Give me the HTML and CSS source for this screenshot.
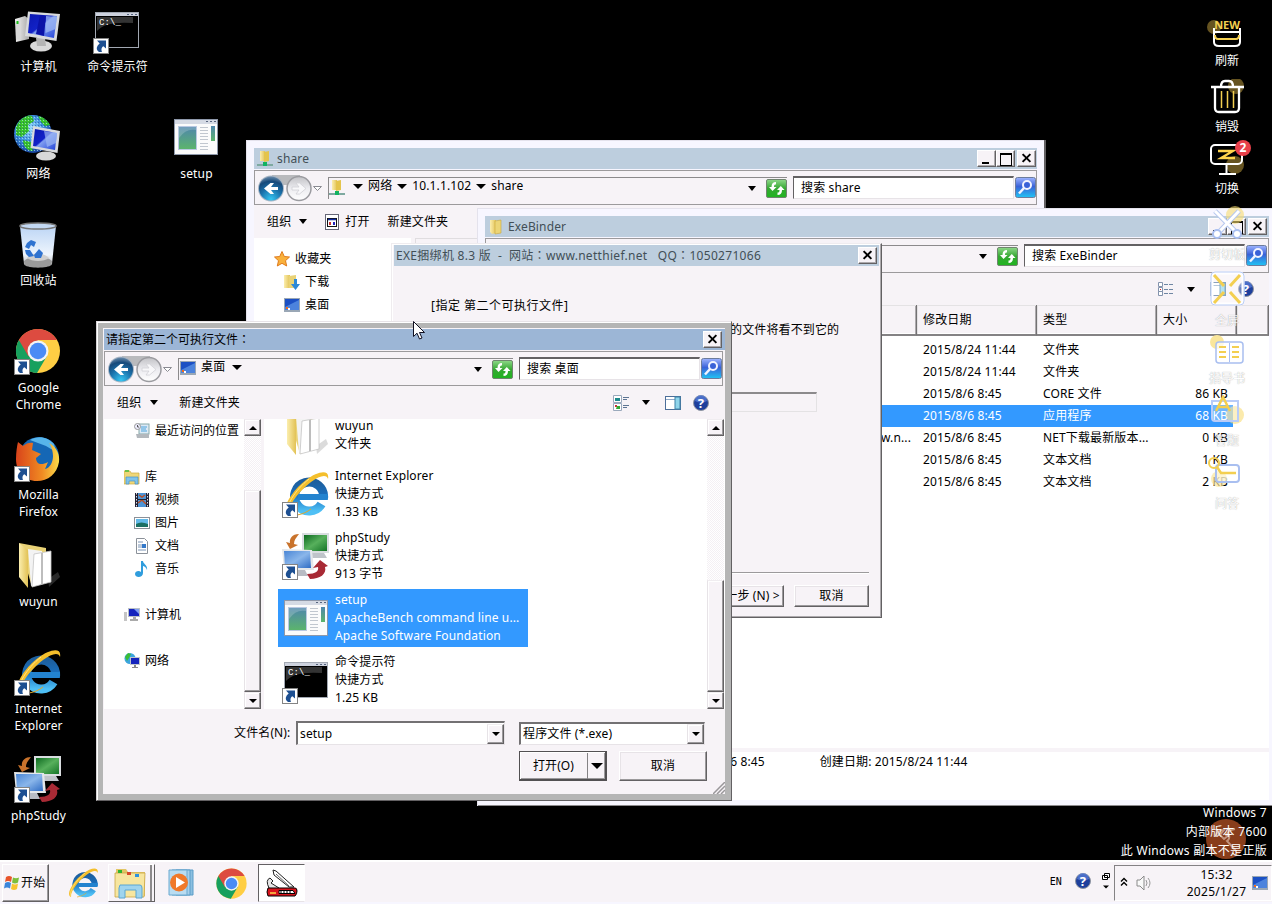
FILE: index.html
```html
<!DOCTYPE html>
<html lang="zh-CN">
<head>
<meta charset="utf-8">
<title>Windows 7</title>
<link rel="stylesheet" href="styles.css">
</head>
<body>
<svg class="sprites" width="0" height="0">
<defs>
<linearGradient id="gScreen" x1="0" y1="0" x2="1" y2="1"><stop offset="0" stop-color="#0b18b0"/><stop offset=".45" stop-color="#1222c8"/><stop offset=".5" stop-color="#7f9df0"/><stop offset="1" stop-color="#1f3fd8"/></linearGradient>
<linearGradient id="gCase" x1="0" y1="0" x2="1" y2="0"><stop offset="0" stop-color="#f4f4f4"/><stop offset="1" stop-color="#a9a9a9"/></linearGradient>
<radialGradient id="gGlobe" cx=".4" cy=".35" r=".7"><stop offset="0" stop-color="#9fe0ff"/><stop offset=".5" stop-color="#3c8fdd"/><stop offset="1" stop-color="#123a94"/></radialGradient>
<linearGradient id="gBin" x1="0" y1="0" x2="0" y2="1"><stop offset="0" stop-color="#bcd5f5"/><stop offset=".7" stop-color="#eef5fd"/><stop offset="1" stop-color="#b9b9b9"/></linearGradient>
<linearGradient id="gFolder" x1="0" y1="0" x2="1" y2="0"><stop offset="0" stop-color="#fbeeae"/><stop offset="1" stop-color="#e2c256"/></linearGradient>
<linearGradient id="gIe" x1="0" y1="0" x2="0" y2="1"><stop offset="0" stop-color="#1d5f9e"/><stop offset=".45" stop-color="#1a6fbd"/><stop offset="1" stop-color="#4fc0f5"/></linearGradient>
<linearGradient id="gApp" x1="0" y1="0" x2="0" y2="1"><stop offset="0" stop-color="#4f86ad"/><stop offset="1" stop-color="#5cb56b"/></linearGradient>
<linearGradient id="gGreen" x1="0" y1="0" x2="1" y2="1"><stop offset="0" stop-color="#0d6a20"/><stop offset=".5" stop-color="#57b05c"/><stop offset="1" stop-color="#147527"/></linearGradient>
<linearGradient id="gBlue" x1="0" y1="0" x2="1" y2="1"><stop offset="0" stop-color="#4a86d6"/><stop offset=".5" stop-color="#8ab6ea"/><stop offset="1" stop-color="#2f6cc4"/></linearGradient>
<radialGradient id="gOrb" cx=".5" cy=".95" r="1"><stop offset="0" stop-color="#35c6f2"/><stop offset=".45" stop-color="#1a72ac"/><stop offset=".75" stop-color="#174a7a"/><stop offset="1" stop-color="#7f9cb8"/></radialGradient>
<linearGradient id="gSearch" x1="0" y1="0" x2="0" y2="1"><stop offset="0" stop-color="#9fb4ff"/><stop offset=".45" stop-color="#3a62d8"/><stop offset="1" stop-color="#20c4f4"/></linearGradient>
<linearGradient id="gRefresh" x1="0" y1="0" x2="0" y2="1"><stop offset="0" stop-color="#8fd88a"/><stop offset=".5" stop-color="#35a832"/><stop offset="1" stop-color="#20b420"/></linearGradient>
<linearGradient id="gFox" x1="0" y1="0" x2="1" y2="0"><stop offset="0" stop-color="#d8431b"/><stop offset=".6" stop-color="#f08a22"/><stop offset="1" stop-color="#fbdc4a"/></linearGradient>
<linearGradient id="gSilver" x1="0" y1="0" x2="0" y2="1"><stop offset="0" stop-color="#c2c2c6"/><stop offset=".5" stop-color="#ececf0"/><stop offset="1" stop-color="#ffffff"/></linearGradient>
<pattern id="pGlobe" width="3" height="3" patternUnits="userSpaceOnUse"><rect width="1" height="1" fill="#19358c" opacity=".5"/><rect x="2" y="1" width="1" height="1" fill="#c8f4ff" opacity=".6"/></pattern>
</defs>

<symbol id="shortcut" viewBox="0 0 16 16"><rect x=".5" y=".5" width="15" height="15" fill="#fff" stroke="#848484"/><path d="M4 2.500h9v8l-2.600-2.300C8 9.600 8.300 12 9 14H6C2.500 11.500 3.500 8 6.700 5.400z" fill="#1d4f91"/></symbol>
<symbol id="computer" viewBox="0 0 48 48"><path d="M1 13l10-3 4 3v20L2 36z" fill="url(#gCase)"/><path d="M2 16l5-1v18l-5 1z" fill="#d8d8d8"/><rect x="2.500" y="15" width="2" height="3" fill="#19c019"/><ellipse cx="27" cy="40" rx="11" ry="5.500" fill="#d9d9d9"/><path d="M22 32h9l1 8h-9z" fill="#b4b4b4"/><path d="M14 5.500L46 8l-3.500 27L11 30z" fill="#d8dadd"/><path d="M16 8l27 2-3 22-26-5z" fill="url(#gScreen)"/><path d="M26 9l6 1-2 20-8-2z" fill="#0a12a8"/><path d="M32 10l11 1-1.500 12-10 4z" fill="#9db8f4" opacity=".75"/></symbol>
<symbol id="network" viewBox="0 0 48 48"><circle cx="19" cy="21" r="19" fill="url(#gGlobe)"/><path d="M2 14C6 5 14 1 18 3l2 5-6 4 1 6-7 6-6-2zM24 3c6 1 10 5 12 9l-5 1-4-4zM9 27l8 2 2 9c-6 0-10-5-10-11z" fill="#38c22b"/><circle cx="19" cy="21" r="19" fill="url(#pGlobe)"/><ellipse cx="32" cy="43" rx="10" ry="4.500" fill="#d8d8d8"/><path d="M19 13l27 5-2.500 22-27-5z" fill="#d8dadd"/><path d="M21 16l22 4-2 17-22-4z" fill="url(#gScreen)"/><path d="M30 18l13 2-1 10-9 4z" fill="#9db8f4" opacity=".7"/></symbol>
<symbol id="bin" viewBox="0 0 48 48"><path d="M6 6h36l-4 38c-4 4-24 4-28 0z" fill="url(#gBin)"/><path d="M10 41c6-6 22-6 28 0l-.5 4c-4 3.500-23 3.500-27 0z" fill="#9b9b9b"/><path d="M13 38c5-6 16-6 22 0-5 4-17 4-22 0z" fill="#cfcfcf"/><ellipse cx="24" cy="6" rx="18" ry="3" fill="#c3d8f2" stroke="#777" stroke-width="1.500"/><path d="M13 23l4-3 5 2-2 5-3-2-2 4-4-2zM11 30l5 0 4 6-5 1-3-3zM20 35l5-6 4 4-2 5h-6z" fill="#2f73d0"/></symbol>
<symbol id="chrome" viewBox="0 0 48 48"><circle cx="24" cy="24" r="22" fill="#ffce44"/><path d="M24 24L4.900 13A22 22 0 0 0 23 46l10-17z" fill="#17a05e"/><path d="M24 13h19A22 22 0 0 0 4.900 13l9.600 16.500z" fill="#dd4b40"/><circle cx="24" cy="24" r="10.500" fill="#f4f4f4"/><circle cx="24" cy="24" r="8.300" fill="#4b8bf5"/></symbol>
<symbol id="firefox" viewBox="0 0 48 48"><circle cx="25" cy="23" r="20" fill="#1567b5"/><path d="M16 6c8-5 18-3 24 4l2 8-10-6z" fill="#57b4ea"/><path d="M4 8l5 4c3-3 8-4 10-3l-1 7 9 4-5 4c0 6 5 8 12 4l-3 7c5-1 8-7 8-13 0-5-2-11-4-13 8 4 11 12 10 19-2 12-11 19-22 19C10 47 2 37 2 25 2 18 3 12 4 8z" fill="url(#gFox)"/></symbol>
<symbol id="folder" viewBox="0 0 48 48"><path d="M34 38l10-7 2 5-11 10z" fill="#888" opacity=".3"/><path d="M5 2l27 5v33l-14 6z" fill="#e9d276"/><path d="M14 8l14 2v32l-11 3z" fill="#f3f3f3"/><path d="M20 13l17-3v31l-19 5z" fill="#fff" stroke="#c4c4c4" stroke-width=".8"/><path d="M28 12v31" stroke="#bdbdbd" stroke-width="2"/><path d="M5 2l9 7v38L5 36z" fill="url(#gFolder)"/></symbol>
<symbol id="ie" viewBox="0 0 48 48"><path d="M41.500 28A14.500 14.500 0 1 0 39.500 34" fill="none" stroke="url(#gIe)" stroke-width="9"/><path d="M16 24h30q.3 3-.2 6H16z" fill="#2383cf"/><path d="M6 45C-3 42 10 20 24 10 36 1 48-1 46 9c-1-5-8-4-17 3C16 22 5 37 6 45z" fill="#f4bf2c"/><path d="M6 44C2 38 13 20 27 9" stroke="#ffe58a" fill="none"/><path d="M15 45c6-1 10-3 14-6" stroke="#dfa72a" fill="none"/></symbol>
<symbol id="php" viewBox="0 0 48 48"><path d="M20 1h27v20H20z" fill="#d9dde0"/><path d="M22 3h23v16H22z" fill="url(#gGreen)"/><path d="M30 21h12l3 5H28z" fill="#bfc4ca"/><path d="M0 17l30 1 2 20H2z" fill="#e4e7ea"/><path d="M2 19h26l1 17H3z" fill="url(#gBlue)"/><path d="M11 38h12l3 6H8z" fill="#b8bcc4"/><path d="M17 2c-7 0-10 5-9 9l-4-1 4 7 8-4-4-1c0-4 2-6 5-10z" fill="#c9732c"/><path d="M38 28l8 6-3 1c2 7-5 12-15 12l-3-5c9 0 12-3 11-7l-5 1z" fill="#a82a35"/></symbol>
<symbol id="app" viewBox="0 0 48 48"><rect x="2.500" y="6.500" width="43" height="35" fill="#fbfbfb" stroke="#8e98aa"/><rect x="3" y="7" width="42" height="4" fill="#d5dae4"/><path d="M34 8.500h2M38 8.500h2M42 8.500h2" stroke="#56647e"/><rect x="6.500" y="13.500" width="18" height="23" fill="url(#gApp)" stroke="#b9c9e2"/><path d="M7 25q7-10 17-8v-3H7z" fill="#fff" opacity=".2"/><path d="M28 14.500h8M28 17.500h8M28 20.500h8M28 23.500h8M28 26.500h8M28 30.500h8M28 33.500h8M28 36.500h8" stroke="#c1c7cf"/><rect x="39" y="13" width="4" height="15" fill="url(#gApp)"/></symbol>
<symbol id="cmd" viewBox="0 0 48 48"><rect x="2.500" y="6.500" width="43" height="35" fill="#000" stroke="#a2a8b2"/><rect x="3" y="7" width="42" height="3" fill="#cdd2de"/><path d="M34 8.500h2M38 8.500h2M42 8.500h2" stroke="#56647e"/><path d="M4 25Q12 15 40 17v-6H4z" fill="#555" opacity=".6"/><text x="6" y="19" class="cmd-text">C:\_</text></symbol>
<symbol id="desktop" viewBox="0 0 16 14"><rect width="16" height="14" fill="#9aa7b5"/><rect x="1" y="1" width="14" height="11" fill="#1c50c4"/><path d="M1 9L15 2v10H1z" fill="#4c83dd"/><rect x="2" y="9" width="2" height="2" fill="#f26b1b"/><rect x="4" y="10" width="2" height="2" fill="#fff"/></symbol>
<symbol id="folderS" viewBox="0 0 16 16"><path d="M2 1h6v13l-4 1-2-2z" fill="url(#gFolder)"/><path d="M7 2l6-1v13l-6 1z" fill="#ecd576" stroke="#c9a83c" stroke-width=".6"/></symbol>
<symbol id="folderNet" viewBox="0 0 16 16"><path d="M3 0h5v10H3z" fill="url(#gFolder)"/><path d="M7 1l5-1v10l-5 1z" fill="#e4c44c"/><path d="M0 14h16" stroke="#7ea9a0" stroke-width="2"/><path d="M6 11h4v4H6z" fill="#12b362"/></symbol>
<symbol id="folderDown" viewBox="0 0 16 16"><path d="M0 1h6v13H0z" fill="url(#gFolder)"/><path d="M5 2l7-1v13H5z" fill="#e9d276"/><path d="M10 5h3v5h3l-4.500 6L7 10h3z" fill="#2c89d8"/></symbol>
<symbol id="star" viewBox="0 0 16 16"><path d="M8 .5l2.300 5 5.200.5-4 3.700 1.200 5.300L8 12.300 3.300 15l1.200-5.300L.5 6l5.200-.5z" fill="#f9b13c" stroke="#df7a1c"/></symbol>
<symbol id="recent" viewBox="0 0 16 16"><rect x="5" y="1" width="10" height="10" fill="#dce9f5" stroke="#8aa"/><path d="M7 4h6M7 6h5M7 8h6" stroke="#4aa3dc"/><path d="M2 11h13v4H3z" fill="#b3b8bd"/><circle cx="3.500" cy="3.500" r="3" fill="#eef" stroke="#999"/><path d="M3.500 2v2h1.500" stroke="#555" fill="none"/></symbol>
<symbol id="library" viewBox="0 0 16 16"><path d="M0 2h6l1 2h8v11H0z" fill="#efd777" stroke="#cda93d" stroke-width=".7"/><rect x="1" y="1" width="4" height="2" fill="#6cc04a"/><path d="M2 8h12v7h-3v-3H5v3H2z" fill="#7fc3ea" stroke="#4b93c9" stroke-width=".7"/></symbol>
<symbol id="video" viewBox="0 0 16 16"><rect x="1" y="1" width="14" height="14" fill="#223"/><path d="M2.500 1v14M13.500 1v14" stroke="#dde" stroke-dasharray="1.500 1.500"/><rect x="4" y="1" width="8" height="14" fill="#4d94d6"/><path d="M5 3l3 2 3-2M4 11l4-3 4 4" stroke="#b84f27" stroke-width="1.500" fill="none"/><path d="M4 7.500h8" stroke="#223"/></symbol>
<symbol id="picture" viewBox="0 0 16 16"><rect x=".5" y="2.500" width="15" height="11" fill="#fff" stroke="#8b9199"/><rect x="2" y="4" width="12" height="8" fill="#62b9e8"/><path d="M2 9q5-3 12 0v3H2z" fill="#1b6f63"/></symbol>
<symbol id="document" viewBox="0 0 16 16"><path d="M2.500.5h8l3 3v12h-11z" fill="#fff" stroke="#8b9199"/><path d="M4 4h5M4 7h4M4 9h4M4 12h8" stroke="#7a93b4"/><rect x="8" y="6" width="4" height="4" fill="#3378c9"/></symbol>
<symbol id="music" viewBox="0 0 16 16"><path d="M7 0h2c0 3 5 4 4 9-1-3-3-4-4-4v7c0 5-8 5-8 1 0-3 4-4 6-2z" fill="#309ddd"/></symbol>
<symbol id="computerS" viewBox="0 0 16 16"><rect x="0" y="5" width="3" height="9" fill="#c5c5c5"/><rect x="4" y="1" width="12" height="9" fill="#b9bfc6"/><rect x="5" y="2" width="10" height="7" fill="#1524bd"/><path d="M10 2h5v5z" fill="#7f9df0"/><path d="M9 10h3v2h2v2H6v-2h3z" fill="#aaa"/></symbol>
<symbol id="networkS" viewBox="0 0 16 16"><circle cx="6" cy="5.500" r="5.500" fill="#3ca5dd"/><path d="M1 4l3-4 3 1-2 4-2 3z" fill="#3bbd34"/><rect x="6" y="4" width="10" height="8" fill="#bfc5cb"/><rect x="7" y="5" width="8" height="6" fill="#1524bd"/><path d="M10 12h2v2h2v1H8v-1h2z" fill="#888"/></symbol>
<symbol id="orbs" viewBox="0 0 64 28"><path d="M14 1h28v10H14z" fill="#b9babd"/><circle cx="13" cy="14.500" r="13" fill="#a7b5c4"/><circle cx="13" cy="14.500" r="12" fill="url(#gOrb)"/><path d="M20 13v3h-7l3 4h-3.500L6 14.500 12.500 9H16l-3 4z" fill="#fff"/><circle cx="41" cy="14.500" r="12" fill="url(#gSilver)" stroke="#9b9ba0" stroke-width="1.500"/><path d="M34 13v3h7l-3 4h3.500l6.500-5.500L41.500 9H38l3 4z" fill="#f8f8fa" stroke="#d1d1d5" stroke-width=".8"/><path d="M55.500 12.500h8l-4 4z" fill="#fff" stroke="#8a8a92"/></symbol>
<symbol id="refresh" viewBox="0 0 21 19"><rect x=".5" y=".5" width="20" height="18" rx="1.500" fill="url(#gRefresh)" stroke="#70856f"/><path d="M10 3v2.500c-1.500 0-2 .5-2 2.500h2.500L6.500 12 3 8h2.500c0-3.500 1.500-5 4.500-5zM11.500 16v-2.500c1.500 0 2-.5 2-2.500H11l3.800-4L18.500 11H16c0 3.500-1.500 5-4.500 5z" fill="#fff"/></symbol>
<symbol id="search" viewBox="0 0 21 21"><rect x=".5" y=".5" width="20" height="20" rx="2" fill="url(#gSearch)" stroke="#6c7c9c"/><circle cx="12" cy="8" r="4" fill="#3a62d8" stroke="#f2f4ff" stroke-width="2"/><path d="M9 11l-5 5.500" stroke="#f2f4ff" stroke-width="2.500"/></symbol>
<symbol id="help" viewBox="0 0 16 16"><circle cx="8" cy="8" r="7.500" fill="#1e3f9c" stroke="#8f95a0"/><path d="M2 6a6 6 0 0 1 12 0q-6 3-12 0" fill="#5b82dc" opacity=".7"/><text x="8" y="12.500" class="help-text">?</text></symbol>
<symbol id="pane" viewBox="0 0 16 14"><rect x=".5" y=".5" width="15" height="13" fill="#fff" stroke="#4c6e99"/><path d="M1 3.500h14" stroke="#90a9c8"/><rect x="10" y="1" width="5" height="12" fill="#8fd4ea" stroke="#3c82a8"/></symbol>
<symbol id="tiles" viewBox="0 0 16 16"><path d="M.5.500h8v7h-8zM.5 8.500h8v7h-8z" fill="#fff" stroke="#9aa9bc"/><path d="M2 3h5v3H2z" fill="#1c8a8c"/><path d="M2 10h2v2H2z" fill="#c33"/><path d="M4 11h3v3H3z" fill="#3a3"/><path d="M10 2.500h6M10 4.500h4M10 10.500h6M10 12.500h4" stroke="#5d7593"/></symbol>
<symbol id="details" viewBox="0 0 16 14"><path d="M.5.500h4v4h-4zM.5 5.500h4v4h-4zM.5 9.500h4v4h-4z" fill="#fff" stroke="#8493ad"/><path d="M2 7h1v1H2z" fill="#d22"/><path d="M6 2.500h4M11 2.500h4M6 7.500h4M11 7.500h4M6 11.500h4M11 11.500h4" stroke="#6f86a3"/></symbol>
<symbol id="openApp" viewBox="0 0 14 16"><rect x=".5" y=".5" width="13" height="15" fill="#fff" stroke="#667"/><rect x="2.500" y="4.500" width="9" height="8" fill="#fff" stroke="#111"/><path d="M3 5.500h8" stroke="#112a9c" stroke-width="1.500"/><path d="M4 8h2v3H4z" fill="#c33"/><path d="M8 8h2v3H8z" fill="#22b"/></symbol>
<symbol id="flag" viewBox="0 0 16 16"><path d="M2 2q3-2 6 0L7 7Q4 5 1 7z" fill="#e8542a"/><path d="M9 2.500q3 1.500 6 0l-1 5q-3 2-6 0z" fill="#7cbf3a"/><path d="M1 8q3-2 6 0l-1 5.500q-3-2-6 0z" fill="#3b86da"/><path d="M8 8.500q3 2 6 0l-1 5.500q-3 2-6 0z" fill="#f7c52e"/></symbol>
<symbol id="explorer" viewBox="0 0 34 32"><path d="M3 2h10l2 3h17v24H3z" fill="#e2c666"/><path d="M2 6h30l-1 24H2z" fill="#f7e6a0" stroke="#c9a545" stroke-width=".8"/><path d="M5 3h4v3H5z" fill="#2fb52f"/><path d="M14 5h4v3h-4z" fill="#d9472b"/><path d="M22 7h4v3h-4z" fill="#2c93de"/><path d="M7 18h20q2 0 2 3v10h-6v-8H12v8H6V21z" fill="#9fd4ee" stroke="#5ba6d2"/></symbol>
<symbol id="wmp" viewBox="0 0 28 28"><path d="M8 1h17v25H8z" fill="#8cbfe0" stroke="#5b9dc8"/><path d="M4 1h18v25H4z" fill="#a7d0ea" stroke="#5b9dc8"/><path d="M1 1h18v25H1z" fill="#b9dcf1" stroke="#6aa9d0"/><circle cx="11" cy="13.500" r="9" fill="#f0792a"/><path d="M8 8l9 5.500L8 19z" fill="#fff"/></symbol>
<symbol id="knife" viewBox="0 0 32 28"><path d="M7 1l3 1 18 16-5 0L8 6z" fill="#fff" stroke="#222"/><path d="M10 5l13 12" stroke="#222" stroke-width=".7"/><path d="M3 19q-4-8 1-10l3 3-2 2 8 5" fill="#e6e6e6" stroke="#222"/><path d="M2 19h27q2 0 2 3t-2 5H2q-2-4 0-8z" fill="#d8141c" stroke="#000"/><path d="M13 21.500h14l2 3H13z" fill="#fff" stroke="#000"/><path d="M15 21v4M18 21v4M21 21v4M24 21v4" stroke="#000"/><path d="M4 24h6" stroke="#ffd44a" stroke-width="1.500"/></symbol>
</svg>

<main class="desktop">
  <section class="shortcuts">
    <div class="shortcut c1 r1"><svg class="pic"><use href="#computer"/></svg><span>计算机</span></div>
    <div class="shortcut c2 r1"><svg class="pic"><use href="#cmd"/><use href="#shortcut" x="0" y="32" width="16" height="16"/></svg><span>命令提示符</span></div>
    <div class="shortcut c1 r2"><svg class="pic"><use href="#network"/></svg><span>网络</span></div>
    <div class="shortcut c3 r2"><svg class="pic"><use href="#app"/></svg><span>setup</span></div>
    <div class="shortcut c1 r3"><svg class="pic"><use href="#bin"/></svg><span>回收站</span></div>
    <div class="shortcut c1 r4"><svg class="pic"><use href="#chrome"/><use href="#shortcut" x="0" y="32" width="16" height="16"/></svg><span>Google<br>Chrome</span></div>
    <div class="shortcut c1 r5"><svg class="pic"><use href="#firefox"/><use href="#shortcut" x="0" y="32" width="16" height="16"/></svg><span>Mozilla<br>Firefox</span></div>
    <div class="shortcut c1 r6"><svg class="pic"><use href="#folder"/></svg><span>wuyun</span></div>
    <div class="shortcut c1 r7"><svg class="pic"><use href="#ie"/><use href="#shortcut" x="0" y="32" width="16" height="16"/></svg><span>Internet<br>Explorer</span></div>
    <div class="shortcut c1 r8"><svg class="pic"><use href="#php"/><use href="#shortcut" x="0" y="32" width="16" height="16"/></svg><span>phpStudy</span></div>
  </section>

  <section class="watermark"><svg class="stamp" viewBox="0 0 40 40"><circle cx="20" cy="20" r="20" fill="#a04820" opacity=".85"/><path d="M10 17q1-6 8-6l-4 5 4 4 5-4q1 4-2 6l9 10M29 10q-7 1-9 7" stroke="#dcb9a8" stroke-width="2" fill="none" opacity=".7"/></svg><p>Windows 7</p><p>内部版本 7600</p><p>此 Windows 副本不是正版</p></section>

  <section class="window share">
    <header class="title"><svg class="i16"><use href="#folderNet"/></svg><span class="grow">share</span><i class="cap min"></i><i class="cap max"></i><i class="cap close"></i></header>
    <div class="address"><svg class="orbs"><use href="#orbs"/></svg>
      <div class="path"><svg class="i16"><use href="#folderNet"/></svg><i class="arrow first"></i><span>网络</span><i class="arrow"></i><span>10.1.1.102</span><i class="arrow"></i><span>share</span><i class="arrow last"></i><svg class="refresh"><use href="#refresh"/></svg></div>
      <div class="find">搜索 share</div><svg class="go"><use href="#search"/></svg></div>
    <div class="tools"><span>组织</span><i class="arrow"></i><svg class="open-app"><use href="#openApp"/></svg><span>打开</span><span class="new">新建文件夹</span></div>
    <div class="body"><nav class="tree">
      <div class="node"><svg class="i16"><use href="#star"/></svg>收藏夹</div>
      <div class="node sub"><svg class="i16"><use href="#folderDown"/></svg>下载</div>
      <div class="node sub"><svg class="i16"><use href="#desktop"/></svg>桌面</div>
    </nav><div class="listhead"></div></div>
  </section>

  <section class="window binder">
    <header class="title"><svg class="i16"><use href="#folderS"/></svg><span class="grow">ExeBinder</span><i class="cap min"></i><i class="cap max"></i><i class="cap close"></i></header>
    <div class="address"><svg class="orbs"><use href="#orbs"/></svg>
      <div class="path"><i class="arrow last"></i><svg class="refresh"><use href="#refresh"/></svg></div>
      <div class="find">搜索 ExeBinder</div><svg class="go"><use href="#search"/></svg></div>
    <div class="tools right"><svg class="details"><use href="#details"/></svg><i class="arrow"></i><svg class="pane"><use href="#pane"/></svg><svg class="i16"><use href="#help"/></svg></div>
    <div class="files">
      <div class="row head"><b></b><b>修改日期</b><b>类型</b><b>大小</b><b></b></div>
      <div class="row"><span></span><span>2015/8/24 11:44</span><span>文件夹</span><span></span></div>
      <div class="row"><span></span><span>2015/8/24 11:44</span><span>文件夹</span><span></span></div>
      <div class="row"><span></span><span>2015/8/6 8:45</span><span>CORE 文件</span><span>86 KB</span></div>
      <div class="row selected"><span></span><span>2015/8/6 8:45</span><span>应用程序</span><span>68 KB</span></div>
      <div class="row"><span>w.n...</span><span>2015/8/6 8:45</span><span>NET下载最新版本...</span><span>0 KB</span></div>
      <div class="row"><span></span><span>2015/8/6 8:45</span><span>文本文档</span><span>1 KB</span></div>
      <div class="row"><span></span><span>2015/8/6 8:45</span><span>文本文档</span><span>2 KB</span></div>
    </div>
    <footer class="status"><span>2015/8/6 8:45</span><span class="created">创建日期: 2015/8/24 11:44</span></footer>
  </section>

  <section class="window wizard">
    <header class="title"><span class="grow">EXE捆绑机 8.3 版 &nbsp;- &nbsp;网站<span class="colon" lang="zh-TW">：</span>www.netthief.net &nbsp; QQ<span class="colon" lang="zh-TW">：</span>1050271066</span><i class="cap close"></i></header>
    <h2>[指定 第二个可执行文件]</h2>
    <p>的文件将看不到它的</p>
    <div class="field"></div>
    <footer class="actions"><div class="btn">下一步 (N) &gt;</div><div class="btn">取消</div></footer>
  </section>

  <section class="window picker">
    <header class="title"><span class="grow">请指定第二个可执行文件<span class="colon" lang="zh-TW">：</span></span><i class="cap close"></i></header>
    <div class="address"><svg class="orbs"><use href="#orbs"/></svg>
      <div class="path"><svg class="i16"><use href="#desktop"/></svg><span>桌面</span><i class="arrow"></i><i class="arrow last"></i><svg class="refresh"><use href="#refresh"/></svg></div>
      <div class="find">搜索 桌面</div><svg class="go"><use href="#search"/></svg></div>
    <div class="tools"><span>组织</span><i class="arrow"></i><span class="new grow">新建文件夹</span><svg class="i16"><use href="#tiles"/></svg><i class="arrow"></i><svg class="pane"><use href="#pane"/></svg><svg class="i16"><use href="#help"/></svg></div>
    <div class="body">
      <nav class="tree">
        <div class="node sub"><svg class="i16"><use href="#recent"/></svg>最近访问的位置</div>
        <div class="node group"><svg class="i16"><use href="#library"/></svg>库</div>
        <div class="node sub"><svg class="i16"><use href="#video"/></svg>视频</div>
        <div class="node sub"><svg class="i16"><use href="#picture"/></svg>图片</div>
        <div class="node sub"><svg class="i16"><use href="#document"/></svg>文档</div>
        <div class="node sub"><svg class="i16"><use href="#music"/></svg>音乐</div>
        <div class="node group"><svg class="i16"><use href="#computerS"/></svg>计算机</div>
        <div class="node group"><svg class="i16"><use href="#networkS"/></svg>网络</div>
      </nav>
      <div class="scroll nav-scroll"><i class="sb up"></i><i class="thumb"></i><i class="sb down"></i></div>
      <div class="tiles">
        <div class="tile first"><svg class="pic"><use href="#folder"/></svg><div>wuyun<br>文件夹</div></div>
        <div class="tile"><svg class="pic"><use href="#ie"/><use href="#shortcut" x="0" y="32" width="16" height="16"/></svg><div>Internet Explorer<br>快捷方式<br>1.33 KB</div></div>
        <div class="tile"><svg class="pic"><use href="#php"/><use href="#shortcut" x="0" y="32" width="16" height="16"/></svg><div>phpStudy<br>快捷方式<br>913 字节</div></div>
        <div class="tile selected"><svg class="pic"><use href="#app"/></svg><div>setup<br>ApacheBench command line u...<br>Apache Software Foundation</div></div>
        <div class="tile"><svg class="pic"><use href="#cmd"/><use href="#shortcut" x="0" y="32" width="16" height="16"/></svg><div>命令提示符<br>快捷方式<br>1.25 KB</div></div>
      </div>
      <div class="scroll"><i class="sb up"></i><i class="thumb"></i><i class="sb down"></i></div>
    </div>
    <div class="form">
      <label>文件名(N):</label><div class="combo">setup<i class="drop"></i></div><div class="combo type">程序文件 (*.exe)<i class="drop"></i></div>
    </div>
    <div class="buttons"><div class="btn split"><span>打开(O)</span><i class="arrow"></i></div><div class="btn">取消</div></div>
    <svg class="grip" viewBox="0 0 12 12"><path d="M0 12L12 0M4 12l8-8M8 12l4-4" stroke="#9a979a" stroke-width="1.500"/></svg>
  </section>

  <svg class="cursor" viewBox="0 0 12 19"><path d="M.5.500v15l3.500-3.300 2.500 5.800 2.500-1-2.500-5.500h5z" fill="#fff" stroke="#112"/></svg>

  <aside class="dock">
    <div class="tool t1"><svg viewBox="0 0 40 36"><circle cx="7" cy="10" r="7" fill="#655320"/><path d="M7 11v14q0 4 5 4h16q5 0 5-4V11M7 15h26" stroke="#fff" stroke-width="2" fill="none"/><path d="M8 18q0 4 3 4h18q3 0 3-4" stroke="#f3cf50" stroke-width="2" fill="none"/><text x="20" y="12" class="new-text">NEW</text></svg><span>刷新</span></div>
    <div class="tool t2"><svg viewBox="0 0 40 36"><circle cx="29" cy="7" r="8" fill="#655320"/><path d="M4 8h33M14 8q0-6 4-6h4q4 0 4 6M8 8v21q0 4 4 4h16q4 0 4-4V8" stroke="#fff" stroke-width="2.300" fill="none"/><path d="M14.500 12v17M20.500 12v17M26.500 12v17" stroke="#f3cf50" stroke-width="1.500"/></svg><span>销毁</span></div>
    <div class="tool t3"><svg viewBox="0 0 40 36"><circle cx="28" cy="22" r="9" fill="#655320"/><rect x="4" y="2" width="31" height="19" rx="4" fill="none" stroke="#fff" stroke-width="2"/><path d="M19.500 21v9M12 31h17" stroke="#fff" stroke-width="2"/><path d="M11 8h15L14 15h14" stroke="#ffd34b" stroke-width="2.300" fill="none"/></svg><span>切换</span><b class="badge">2</b></div>
    <div class="tool faint t4"><svg viewBox="0 0 40 36"><circle cx="28" cy="10" r="9" fill="#f6dc70" opacity=".6"/><path d="M8 6l20 20M32 6L13 26" stroke="#b7c8ef" stroke-width="5"/><path d="M8 6l20 20M32 6L13 26" stroke="#fff" stroke-width="3"/><circle cx="10" cy="29" r="4" fill="#fff" stroke="#a9bff0" stroke-width="2"/><circle cx="30" cy="29" r="4" fill="#fff" stroke="#a9bff0" stroke-width="2"/></svg><span>剪切板</span></div>
    <div class="tool faint t5"><svg viewBox="0 0 40 36"><rect x="5" y="2" width="31" height="31" rx="3" fill="#fff" fill-opacity=".35" stroke="#fff" stroke-width="3"/><rect x="4" y="1" width="33" height="33" rx="4" fill="none" stroke="#b9ccf5"/><path d="M7 4l10 11M33 4L23 15M7 32l10-11M33 32L23 21" stroke="#f3cf50" stroke-width="3"/></svg><span>全屏</span></div>
    <div class="tool faint t6"><svg viewBox="0 0 40 36"><circle cx="10" cy="9" r="7" fill="#fae69b"/><rect x="9" y="9" width="27" height="21" rx="3" fill="#fff" fill-opacity=".7" stroke="#a9bff0" stroke-width="1.500"/><path d="M22.500 10v19" stroke="#a9bff0"/><path d="M12 14h7M12 19h7M12 24h7M25 14h7M25 19h7M25 24h7" stroke="#f3cf50" stroke-width="2"/></svg><span>指导书</span></div>
    <div class="tool faint t7"><svg viewBox="0 0 40 36"><circle cx="28" cy="20" r="9" fill="#f8dc75" opacity=".6"/><path d="M5 6h26v20H8q-3 0-3-3z" fill="#fff" fill-opacity=".3" stroke="#b9ccf8" stroke-width="2"/><path d="M9 16l7-14 7 14M12 12h9" stroke="#f3cf50" stroke-width="2.500" fill="none"/></svg><span>答题</span></div>
    <div class="tool faint t8"><svg viewBox="0 0 40 36"><circle cx="12" cy="23" r="8" fill="#fae69b" opacity=".7"/><rect x="9" y="9" width="23" height="17" rx="3" fill="#fff" fill-opacity=".4" stroke="#a9bff0" stroke-width="2"/><circle cx="7" cy="7" r="5" fill="none" stroke="#f3cf50" stroke-width="2"/><path d="M10 11l4 6h15" stroke="#f3cf50" stroke-width="2.500" fill="none"/></svg><span>问答</span></div>
  </aside>
</main>

<footer class="taskbar">
  <div class="start"><svg class="i16"><use href="#flag"/></svg>开始</div>
  <svg class="tb-ie"><use href="#ie"/></svg>
  <div class="stack"><svg class="tb-exp"><use href="#explorer"/></svg></div>
  <svg class="tb-wmp"><use href="#wmp"/></svg>
  <svg class="tb-chrome"><use href="#chrome"/></svg>
  <div class="active"><svg class="tb-knife"><use href="#knife"/></svg></div>
  <div class="lang">EN</div>
  <svg class="i16 tb-help"><use href="#help"/></svg>
  <svg class="restore" viewBox="0 0 10 18"><path d="M3.500 1.500h5v4h-5z M1.500 3.500h5v4h-5z" fill="#fff" stroke="#000"/><path d="M2 13.500h6L5 16.500z" fill="#000"/></svg>
  <div class="tray"><svg class="chev" viewBox="0 0 8 10"><path d="M1 4.500l3-3 3 3M1 8.500l3-3 3 3" stroke="#000" stroke-width="1.400" fill="none"/></svg>
    <svg class="i16 speaker" viewBox="0 0 16 16"><path d="M1 5h3l4-4v14l-4-4H1z" fill="#fafafa" stroke="#8a8a8a"/><path d="M10 5q2 3 0 6M12 3q4 5 0 10" stroke="#9a9a9a" fill="none"/></svg>
    <div class="clock">15:32<br>2025/1/27</div><svg class="i16"><use href="#desktop"/></svg></div>
</footer>
</body>
</html>
```
FILE: styles.css
```css
* { box-sizing: border-box; }
html, body { margin: 0; width: 1272px; height: 904px; overflow: hidden; background: #000; }
body { font: 12px/18px "Noto Sans", "Noto Sans CJK SC", sans-serif; letter-spacing: .13px; color: #000; display: flex; flex-direction: column; }
p, h2 { margin: 0; font: inherit; }
i, b { font-style: normal; font-weight: normal; }
svg { display: block; flex: none; }
.sprites { position: absolute; }
.i16 { width: 16px; height: 16px; }
.pic { width: 48px; height: 48px; }
.grow { flex: 1; }
.colon { font-family: "Noto Sans CJK TC", sans-serif; line-height: 1; }
.cmd-text { font: 9px "Liberation Mono", monospace; fill: #fff; }
.help-text { font: bold 13px "Noto Sans", sans-serif; fill: #fff; text-anchor: middle; }
.new-text { font: bold 11px "Noto Sans", sans-serif; fill: #f3cf50; text-anchor: middle; letter-spacing: 0; }

.desktop { position: relative; width: 1272px; height: 860px; overflow: hidden; }
.shortcuts { display: grid; grid-template-columns: repeat(3, 79px); grid-template-rows: repeat(8, 107px); padding-top: 6px; color: #fff; width: 237px; margin-left: -1px; }
.shortcut { display: flex; flex-direction: column; align-items: center; text-align: center; line-height: 17px; gap: 4px; }
.shortcut .pic { margin-right: 2px; }
.c1 { grid-column: 1; } .c2 { grid-column: 2; } .c3 { grid-column: 3; }
.r1 { grid-row: 1; } .r2 { grid-row: 2; } .r3 { grid-row: 3; } .r4 { grid-row: 4; }
.r5 { grid-row: 5; } .r6 { grid-row: 6; } .r7 { grid-row: 7; } .r8 { grid-row: 8; }

.watermark { position: absolute; right: 5px; top: 803px; color: #fff; text-align: right; line-height: 19px; letter-spacing: .3px; }
.watermark p { position: relative; }
.stamp { position: absolute; right: 21px; top: 16px; width: 40px; height: 40px; }

.window { position: absolute; background: #f7f3f7; display: flex; flex-direction: column; }
.title { display: flex; align-items: center; flex: none; height: 21px; background: #bdcede; color: #424f56; padding: 0 2px 0 3px; }
.title .i16 { margin-right: 4px; }
.cap { position: relative; width: 19px; height: 17px; background: #f7f3f7; border: 1px solid; border-color: #fff #636163 #636163 #fff; box-shadow: inset -1px -1px #adaaad; }
.cap.close { margin-left: 2px; }
.cap.close::before, .cap.close::after { content: ""; position: absolute; left: 3px; top: 6px; width: 11px; height: 2px; background: #000; transform: rotate(45deg); }
.cap.close::after { transform: rotate(-45deg); }
.cap.min::before { content: ""; position: absolute; left: 4px; top: 11px; width: 7px; height: 2px; background: #000; }
.cap.max::before { content: ""; position: absolute; left: 3px; top: 2px; width: 10px; height: 10px; border: 1px solid #000; border-top-width: 2px; }

.address { display: flex; align-items: center; flex: none; height: 35px; margin-top: 1px; padding-left: 3px; border: 1px solid #9c9a9c; }
.orbs { width: 64px; height: 28px; }
.path { flex: 1; display: flex; align-items: center; height: 22px; margin-left: 6px; border-left: 1px solid #8c8a8c; border-top: 1px solid #8c8a8c; }
.path span { margin-top: -4px; }
.arrow { width: 0; height: 0; border: 4px solid transparent; border-top: 5px solid #000; border-bottom: 0; margin: 0 6px; flex: none; }
.path .arrow { border-width: 5px 5px 0; margin: -4px 5px 0; }
.path .arrow.first { margin-left: 8px; }
.path .arrow.last { margin: 0 10px 0 auto; border-width: 5px 4.500px 0; }
.refresh { width: 21px; height: 19px; }
.find { display: flex; align-items: center; width: 222px; height: 23px; margin-left: 6px; padding-left: 7px; background: #fff; border: 1px solid; border-color: #636163 #e7e3e7 #e7e3e7 #636163; border-top-width: 2px; }
.go { width: 21px; height: 21px; margin-left: 1px; }
.tools { display: flex; align-items: center; flex: none; height: 33px; padding-left: 13px; }
.tree { width: 157px; background: #fff; flex: none; }
.node { display: flex; align-items: center; gap: 5px; height: 23px; white-space: nowrap; padding-left: 20px; }
.node.sub { padding-left: 30px; }

.share { left: 246px; top: 140px; width: 800px; height: 660px; padding: 8px 7px 8px 8px; background: #f7f6ff; border-right: 2px solid #636163; box-shadow: inset 1px 1px #e4e2ec; }
.share .title { padding-right: 1px; }
.share .find { width: 221px; }
.share > div { background: #f7f3f7; }
.share .tools .arrow { margin: 0 18px 0 8px; }
.open-app { width: 14px; height: 16px; margin-right: 6px; }
.share .tools .new { margin-left: 18px; }
.share .body { flex: 1; display: flex; gap: 4px; }
.share .tree { padding-top: 9px; }
.listhead { flex: 1; border: 1px solid #e0dde0; }

.binder { left: 477px; top: 208px; width: 800px; height: 598px; padding: 8px 8px 6px; background: #f7f6ff; box-shadow: inset 1px 1px #e4e2ec, inset 0 -1px #8c8a8c; }
.binder > div { background: #f7f3f7; }
.binder .address { padding-right: 1px; }
.binder .find { width: 221px; }
.binder .tools { height: 32px; justify-content: flex-end; padding-right: 15px; }
.binder .tools .arrow { margin: 0 15px 0 13px; }
.details { width: 16px; height: 14px; }
.pane { width: 16px; height: 14px; margin-right: 12px; }
.binder .files { flex: 1; background: #fff; }
.row { display: grid; grid-template-columns: 397px 35px 120px 120px 80px 32px; height: 22px; align-items: center; white-space: nowrap; width: 784px; }
.row > :first-child { grid-column: 1 / 3; padding-left: 396px; }
.row > :nth-child(n+2) { padding-left: 6px; }
.row > :nth-child(4) { text-align: right; padding-right: 9px; }
.row.head { height: 28px; background: #f7f3f7; align-items: stretch; margin-bottom: 6px; line-height: 29px; }
.row.head > b { border-right: 1px solid #737173; border-bottom: 2px solid #848284; box-shadow: inset 1px 1px #e4e2e4, inset -1px 0 #adaaad; }
.row.head > :nth-child(4) { text-align: left; }
.row.selected { background: linear-gradient(#3399ff, #3399ff) no-repeat 0 0 / 748px 100%; color: #fff; }
.status { height: 52px; flex: none; background: #fff; border-top: 4px solid #f7f3f7; padding: 1px 0 0 201px; display: flex; gap: 55px; }

.wizard { left: 391px; top: 243px; width: 491px; height: 375px; padding: 1px 2px 2px; border: 1px solid; border-color: #efecef #636163 #636163 #efecef; box-shadow: inset -1px -1px #adaaad, inset 1px 1px #fff; }
.wizard .title { padding: 0 2px 0 2px; letter-spacing: .3px; }
.wizard h2 { margin: 31px 0 0 37px; font-size: 12px; letter-spacing: .5px; }
.wizard p { margin: 6px 0 0 336px; white-space: nowrap; letter-spacing: .13px; }
.field { width: 360px; height: 20px; margin: 53px 0 0 63px; border: 1px solid; border-color: #8c8a8c #e4e2e4 #e4e2e4 #8c8a8c; border-width: 2px 1px 1px; }
.actions { display: flex; justify-content: flex-end; gap: 10px; margin: 160px 10px 0; padding-top: 12px; border-top: 1px solid #9c9a9c; box-shadow: inset 0 1px #fff; }
.btn { display: flex; align-items: center; justify-content: center; width: 75px; height: 22px; background: #f7f3f7; border: 1px solid; border-color: #fff #636163 #636163 #fff; box-shadow: inset -1px -1px #9c9a9c, inset 1px 1px #e7e3e7; white-space: nowrap; }

.picker { left: 96px; top: 321px; width: 636px; height: 480px; border: 1px solid; border-color: #e7e3e7 #636163 #636163 #d6d3d6; padding: 7px 6px 6px 7px; background: #f7f3f7; box-shadow: inset 1px 1px #fff, inset 0 0 0 6px #b5b5b5; }
.picker .title { background: #9cb6d6; color: #000; padding: 0 3px 0 2px; letter-spacing: 0; }
.picker .address { width: 619px; }
.picker .path .i16 { margin: -2px 5px 0 1px; }
.picker .path .arrow:not(.last) { margin-left: 7px; }
.picker .find { width: 181px; }
.picker .tools { padding-right: 16px; height: 33px; }
.picker .tools .arrow { margin: 0 15px 0 9px; }
.picker .tools .new { margin-left: 6px; }
.picker .tools .i16 + .arrow { margin-left: 13px; }
.picker .body { display: flex; height: 290px; flex: none; background: #fff; overflow: hidden; }
.picker .tree { width: 140px; letter-spacing: 0; }
.picker .node.group { margin-top: 23px; }
.scroll { display: flex; flex-direction: column; align-items: stretch; width: 17px; height: 290px; background: repeating-conic-gradient(#fff 0 25%, #f4f0f4 0 50%) 0 0 / 2px 2px; flex: none; }
.nav-scroll { width: 20px; border-right: 3px solid #f7f3f7; }
.sb, .thumb, .drop { background: #f7f3f7; border: 1px solid; border-color: #f0edf0 #636163 #636163 #e7e3e7; box-shadow: inset -1px -1px #9c9a9c, inset 1px 1px #fff; }
.sb, .drop { display: flex; align-items: center; justify-content: center; height: 17px; width: 17px; flex: none; }
.sb::before, .drop::before { content: ""; border: 4px solid transparent; border-top: 4px solid #000; border-bottom: 0; }
.sb.up::before { border-top: 0; border-bottom: 4px solid #000; }
.thumb { margin-top: auto; height: 112px; }
.nav-scroll .thumb { height: 202px; }
.picker .tiles { width: 443px; padding-left: 14px; margin-top: -16px; }
.tile { display: flex; align-items: center; gap: 5px; width: 250px; height: 58px; margin-bottom: 4px; padding-left: 4px; white-space: nowrap; }
.tile .pic { margin-top: -1px; }
.tile.first div { padding-top: 6px; }
.tile.selected { background: #3399ff; color: #fff; }
.form { display: flex; align-items: center; margin-top: 11px; height: 26px; padding-left: 130px; }
.form label { width: 62px; }
.combo { display: flex; align-items: center; justify-content: space-between; width: 209px; height: 24px; padding: 0 0 0 2px; background: #fff; border: 2px solid; border-color: #737173 #e7e3e7 #e7e3e7 #737173; border-width: 2px 1px 1px 2px; }
.combo.type { width: 186px; margin-left: 14px; height: 23px; }
.combo .drop { height: 20px; }
.buttons { display: flex; gap: 12px; padding-left: 415px; margin-top: 5px; }
.buttons .btn { width: 88px; height: 30px; }
.btn.split { border-color: #525052; border-width: 1px 2px 2px 1px; justify-content: flex-start; box-shadow: inset 1px 1px #fff, inset -1px -1px #9c9a9c; }
.btn.split span { width: 68px; text-align: center; border-right: 1px solid #848284; line-height: 26px; }
.btn.split .arrow { margin: 0 0 0 3px; border-width: 6px 6px 0; }
.grip { position: absolute; right: 6px; bottom: 6px; width: 12px; height: 12px; }
.cursor { position: absolute; left: 413px; top: 321px; width: 12px; height: 19px; }

.dock { position: absolute; left: 1207px; top: 0; width: 40px; color: #fff; letter-spacing: 0; }
.tool { position: absolute; left: 0; display: flex; flex-direction: column; align-items: center; gap: 0; line-height: 16px; white-space: nowrap; }
.tool svg { width: 40px; height: 36px; }
.tool.faint span { color: #fff; text-shadow: 0 0 1px #777; opacity: .8; }
.t1 { top: 17px; } .t2 { top: 79px; gap: 4px; } .t3 { top: 143px; gap: 2px; } .t4 { top: 205px; gap: 6px; }
.t5 { top: 271px; gap: 6px; } .t6 { top: 333px; gap: 2px; } .t7 { top: 395px; gap: 2px; } .t8 { top: 456px; gap: 4px; }
.badge { position: absolute; right: -4px; top: -3px; width: 16px; height: 16px; border-radius: 50%; background: #e8404a; text-align: center; font-weight: bold; }

.taskbar { display: flex; align-items: center; height: 44px; background: #f7f3f7; border-top: 2px solid #fff; padding-left: 2px; box-shadow: inset 0 -2px #f7f6ff; }
.start { display: flex; align-items: center; width: 47px; height: 38px; padding-left: 1px; gap: 1px; background: #f7f3f7; border: 1px solid; border-color: #fff #636163 #636163 #fff; box-shadow: inset -1px -1px #9c9a9c; white-space: nowrap; }
.tb-ie { width: 32px; height: 32px; margin-left: 18px; }
.stack { display: flex; align-items: center; width: 47px; height: 38px; margin-left: 9px; padding-left: 4px; border: 1px solid; border-color: #fff #636163 #636163 #fff; background: linear-gradient(90deg, transparent 41px, #8c8a8c 41px 43px, transparent 43px); }
.tb-exp { width: 34px; height: 32px; }
.tb-wmp { width: 28px; height: 28px; margin-left: 13px; }
.tb-chrome { width: 33px; height: 33px; margin-left: 19px; }
.active { display: flex; align-items: center; justify-content: center; width: 47px; height: 38px; margin-left: 10px; background: #fff; border: 1px solid; border-color: #636163 #fff #e7e3e7 #636163; }
.tb-knife { width: 32px; height: 28px; }
.lang { margin-left: auto; font: 10px "DejaVu Sans Mono", monospace; }
.tb-help { margin-left: 13px; margin-top: -4px; }
.lang { margin-top: -4px; }
.restore { width: 10px; height: 18px; margin: -5px 0 0 10px; }
.tray { display: flex; align-items: center; width: 158px; height: 36px; margin-left: 3px; border: 1px solid; border-color: #848284 #fff #fff #848284; padding-left: 5px; }
.chev { width: 8px; height: 10px; margin-top: -3px; }
.speaker { margin-left: 8px; }
.clock { flex: 1; text-align: center; line-height: 17px; padding-left: 33px; white-space: nowrap; letter-spacing: .3px; }
.tray > :last-child { margin: 0 3px 0 4px; }
```
